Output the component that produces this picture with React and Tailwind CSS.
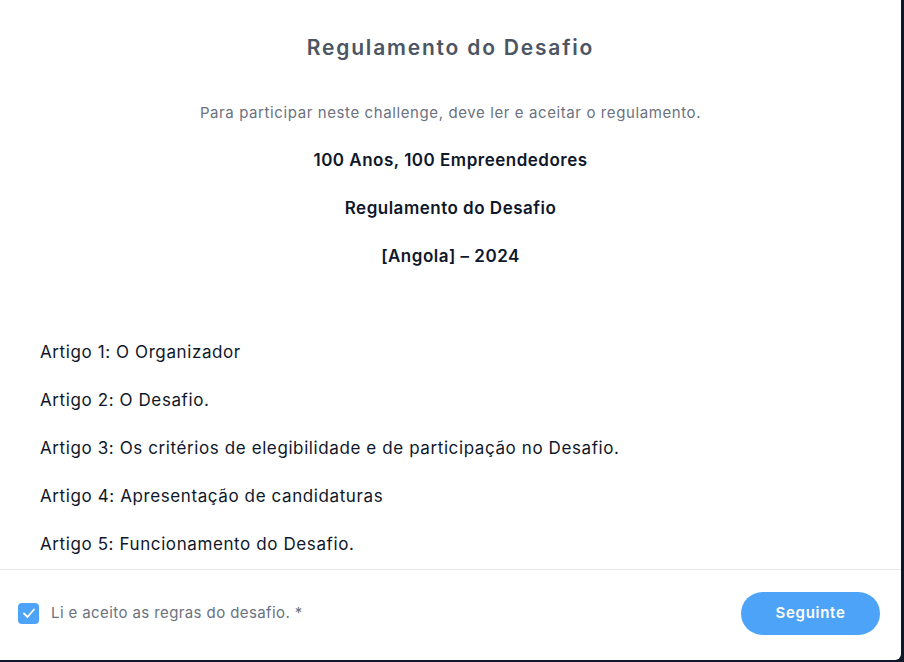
import { useState } from "react";

const artigos = [
  "Artigo 1: O Organizador",
  "Artigo 2: O Desafio.",
  "Artigo 3: Os critérios de elegibilidade e de participação no Desafio.",
  "Artigo 4: Apresentação de candidaturas",
  "Artigo 5: Funcionamento do Desafio.",
];

const App = () => {
  const [accepted, setAccepted] = useState(true);

  return (
    <main className="h-[662px] w-[904px] bg-[#0f172a] font-['Inter',sans-serif]">
      <div className="flex h-[660px] w-[901px] flex-col overflow-hidden rounded-br-md bg-white">
        <div className="flex-1 overflow-hidden">
          <h2 className="pt-[34px] text-center text-[21px] font-semibold leading-[28px] tracking-[1.8px] text-[#4b5563]">
            Regulamento do Desafio
          </h2>
          <p className="mt-[41px] text-center text-[15px] leading-[20px] tracking-[0.6px] text-[#6b7280]">
            Para participar neste challenge, deve ler e aceitar o regulamento.
          </p>
          <div className="mt-[25px] flex flex-col gap-[24px] text-center text-[17px] font-semibold leading-[24px] tracking-[0.5px] text-[#0f172a]">
            <p>100 Anos, 100 Empreendedores</p>
            <p>Regulamento do Desafio</p>
            <p>[Angola] – 2024</p>
          </div>
          <div className="mt-[72px] flex flex-col gap-[24px] px-10 text-[17px] leading-[24px] tracking-[0.6px] text-[#0f172a]">
            {artigos.map((item) => (
              <p key={item}>{item}</p>
            ))}
          </div>
        </div>
        <div className="flex h-[91px] items-center justify-between border-t border-[#e5e7eb] pb-[4px] pl-[18px] pr-[21px]">
          <label className="flex items-center gap-3 text-[15px] tracking-[0.4px] text-[#6b7280]">
            <button
              onClick={() => setAccepted(!accepted)}
              className={`flex h-[21px] w-[21px] items-center justify-center rounded-[4px] ${
                accepted ? "bg-[#4da3f8]" : "border border-gray-300 bg-white"
              }`}
            >
              {accepted && (
                <svg width="14" height="14" viewBox="0 0 14 14" fill="none">
                  <path
                    d="M2 7.5L5.5 11L12 3.5"
                    stroke="white"
                    strokeWidth="1.8"
                    strokeLinecap="round"
                    strokeLinejoin="round"
                  />
                </svg>
              )}
            </button>
            <span>Li e aceito as regras do desafio. *</span>
          </label>
          <button className="h-[43px] w-[139px] rounded-full bg-[#4da3f8] text-[15px] font-semibold tracking-[0.7px] text-white">
            Seguinte
          </button>
        </div>
      </div>
    </main>
  );
};

export default App;
